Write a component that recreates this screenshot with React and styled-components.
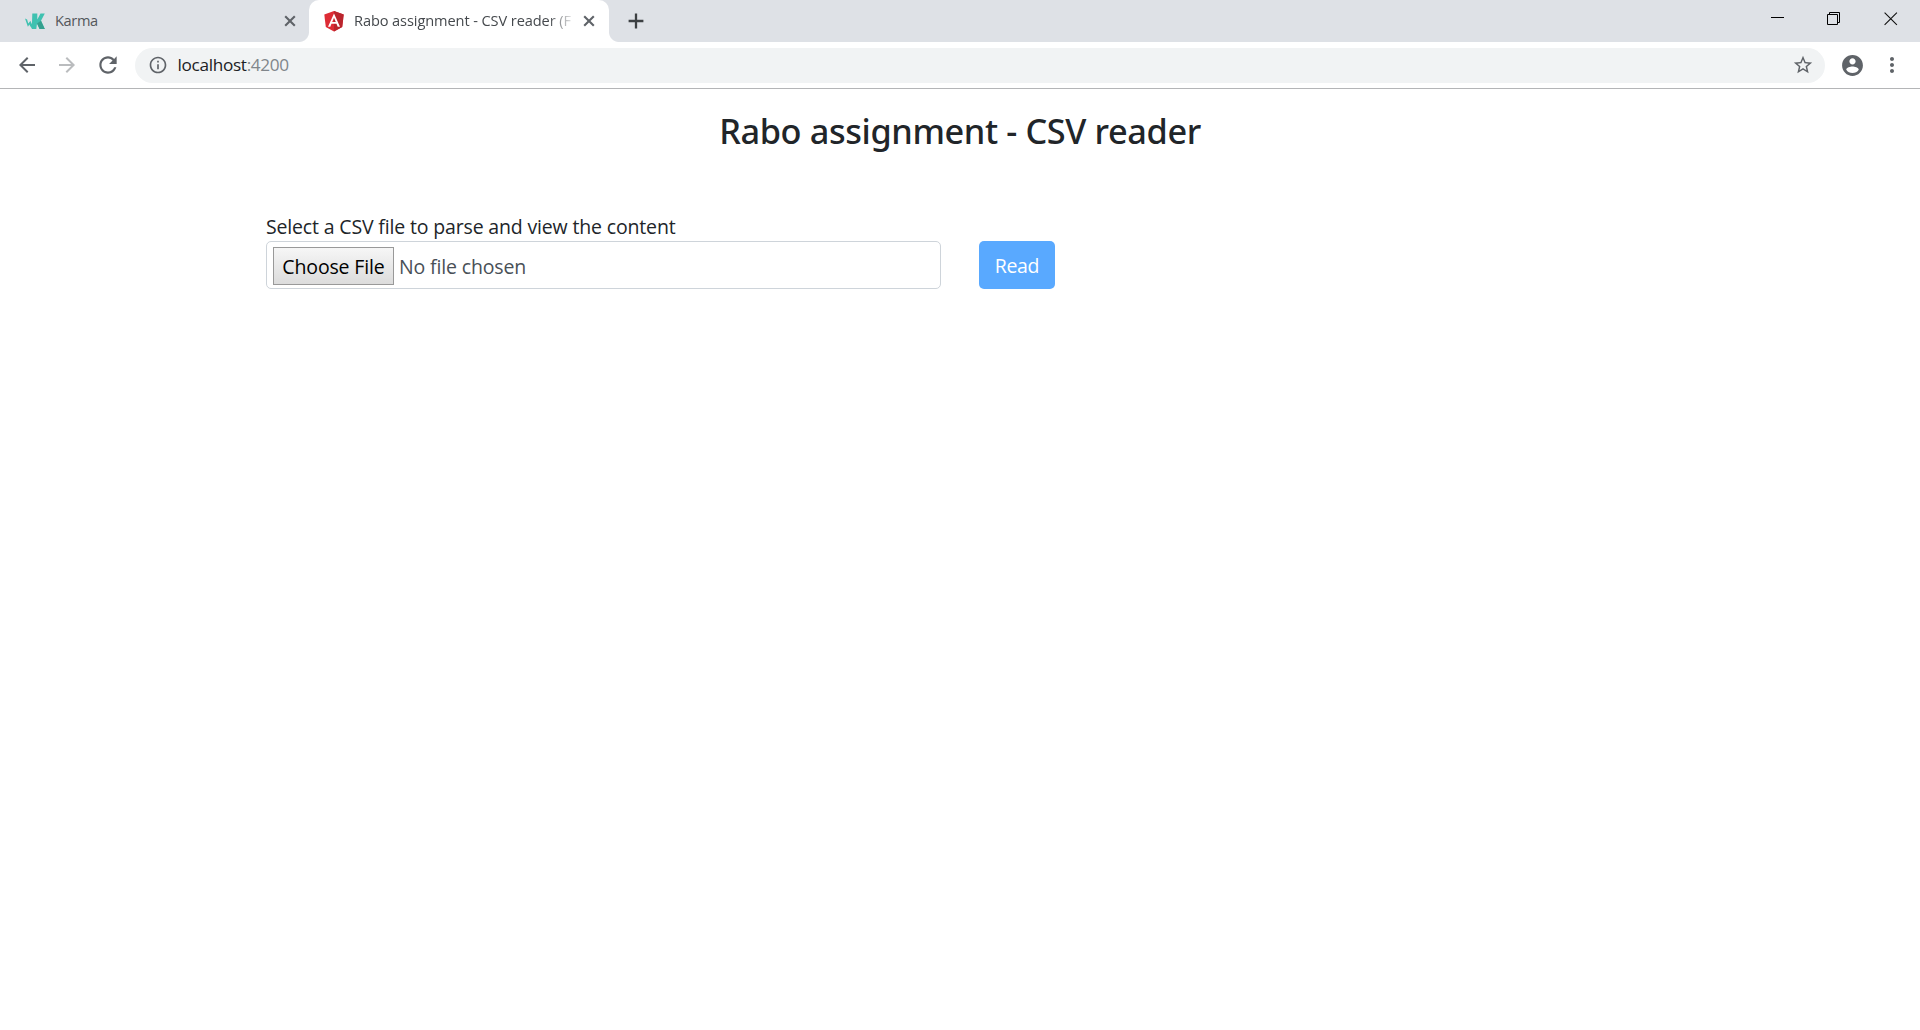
import React from 'react';
import styled, { createGlobalStyle } from 'styled-components';

const GlobalStyle = createGlobalStyle`
  *, *::before, *::after { box-sizing: border-box; }
  html, body { margin: 0; background: #fff; }
  body { font-family: "Open Sans", "Noto Sans", sans-serif; overflow: hidden; }
  svg { display: block; flex: none; }
`;

const Window = styled.div`
  display: flex;
  flex-direction: column;
  height: 100vh;
  background: #fff;
`;

const TabStrip = styled.header`
  display: flex;
  height: 42px;
  background: #dee1e6;
`;

const Tab = styled.div`
  position: relative;
  display: flex;
  align-items: center;
  gap: 10px;
  width: ${(p) => (p.$active ? 300 : 309)}px;
  padding: 0 ${(p) => (p.$active ? 13 : 12)}px 0 ${(p) => (p.$active ? 15 : 25)}px;
  border-radius: 10px 10px 0 0;
  background: ${(p) => (p.$active ? '#fff' : 'transparent')};

  &::before, &::after {
    content: "";
    display: ${(p) => (p.$active ? 'block' : 'none')};
    position: absolute;
    bottom: 0;
    width: 10px;
    height: 10px;
  }
  &::before { left: -10px; background: radial-gradient(circle at 0 0, transparent 9.5px, #fff 10.5px); }
  &::after { right: -10px; background: radial-gradient(circle at 100% 0, transparent 9.5px, #fff 10.5px); }
`;

const TabTitle = styled.span`
  flex: 1;
  min-width: 0;
  overflow: hidden;
  white-space: nowrap;
  padding-bottom: 2px;
  font-size: 14.6px;
  line-height: 24px;
  letter-spacing: ${(p) => p.$tracking}px;
  color: ${(p) => (p.$active ? '#45494d' : '#54575b')};
  mask-image: ${(p) => (p.$active ? 'linear-gradient(to right, #000 194px, transparent 222px)' : 'none')};
`;

const NewTab = styled.div`
  display: flex;
  align-items: center;
  padding-left: 19px;
`;

const WindowControls = styled.div`
  display: flex;
  align-items: flex-start;
  gap: 43px;
  margin-left: auto;
  padding: 12px 22px 0 0;

  svg:last-child { margin-left: 1px; }
`;

const Toolbar = styled.nav`
  display: flex;
  align-items: center;
  height: 47px;
  padding: 0 16px 0 15px;
  border-bottom: 1px solid #b4b5b7;
  background: #fff;
`;

const NavButtons = styled.div`
  display: flex;
  align-items: center;
  gap: 16px;
  width: 120px;
`;

const AddressBar = styled.div`
  display: flex;
  align-items: center;
  flex: 1;
  height: 35px;
  padding: 0 11.5px 0 12.5px;
  border-radius: 18px;
  background: #f1f3f4;
`;

const Url = styled.span`
  flex: 1;
  margin-left: 10px;
  font-size: 17.2px;
  line-height: 24px;
  letter-spacing: -0.32px;
  color: #202124;
`;

const Port = styled.span`
  color: #80868b;
`;

const ToolbarActions = styled.div`
  display: flex;
  align-items: center;
  gap: 15px;
  margin-left: 15px;
`;

const Page = styled.main`
  flex: 1;
  padding-top: 21px;
  color: #212529;
`;

const Title = styled.h1`
  margin: 0 0 60px;
  font-family: "Noto Sans", "Open Sans", sans-serif;
  font-size: 34.3px;
  font-weight: 500;
  line-height: 42px;
  letter-spacing: -0.38px;
  text-align: center;
`;

const Form = styled.form`
  display: flex;
  align-items: flex-end;
  gap: 38px;
  padding-left: 266px;
`;

const Field = styled.div`
  display: flex;
  flex-direction: column;
  width: 675px;
`;

const Label = styled.label`
  height: 29px;
  font-size: 19.5px;
  line-height: 30px;
  letter-spacing: -0.16px;
`;

const FileInput = styled.div`
  display: flex;
  align-items: center;
  gap: 5px;
  height: 48px;
  padding: 1px 6px 0;
  border: 1px solid #ced4da;
  border-radius: 5px;
  background: #fff;
`;

const ChooseButton = styled.button`
  width: 121px;
  height: 38px;
  padding: 2px 0 0;
  border: 1px solid #999;
  border-radius: 0;
  background: linear-gradient(#f6f6f6, #dcdcdc);
  color: #000;
  font: 400 19.5px/34px "Open Sans", sans-serif;
  letter-spacing: -0.14px;
  white-space: nowrap;
`;

const FileStatus = styled.span`
  padding-top: 2px;
  font-size: 19.5px;
  line-height: 34px;
  letter-spacing: -0.15px;
  color: #495057;
`;

const ReadButton = styled.button`
  width: 76px;
  height: 48px;
  padding: 2px 0 0;
  border: 0;
  border-radius: 5px;
  background: #59a9ff;
  color: #fff;
  font: 400 19.5px/46px "Open Sans", sans-serif;
  letter-spacing: -0.35px;
`;

const Icon = ({ d, size = 24, color = '#5f6368' }) => (
  <svg width={size} height={size} viewBox="0 0 24 24" fill={color}>
    <path d={d} />
  </svg>
);

const KarmaLogo = () => (
  <svg width="20" height="17" viewBox="0 0 20 17">
    <path fill="#3fc1b0" d="M7.3 0.4h5v6l3.2-6h4.3l-3.8 7.4L19.8 16h-5.2l-2.6-5.6L11.3 16H6.8z" />
    <path fill="#35a08f" d="M12 10.4l4-2.6 3.8 8.2h-5.2z" />
    <path fill="#3fc1b0" d="M0 5.6l2.1.8 1.2 4 2.2-2.6.9 3.4.6-2.4v6.6l-2.1-2.6-.5-1.4-1.5 2.4z" />
  </svg>
);

const AngularLogo = () => (
  <svg width="20" height="21" viewBox="0 0 20 21">
    <path fill="#dd2c35" d="M10 0l9.7 3.4-1.5 12.5L10 20.6l-8.2-4.7L.3 3.4z" />
    <path fill="#b9252d" d="M10 0l9.7 3.4-1.5 12.5L10 20.6z" />
    <path fill="#fff" fillRule="evenodd" d="M10 2.4L4 15.8h2.3l1.2-3h5l1.2 3H16zm0 4.3l1.8 4.2H8.2z" />
  </svg>
);

const CloseIcon = () => (
  <svg width="14" height="14" viewBox="0 0 14 14" stroke="#5f6368" strokeWidth="2.1">
    <path d="M2.2 2.2l9.6 9.6M11.8 2.2l-9.6 9.6" />
  </svg>
);

export default function App() {
  return (
    <Window>
      <GlobalStyle />
      <TabStrip>
        <Tab>
          <KarmaLogo />
          <TabTitle $tracking={-0.35}>Karma</TabTitle>
          <CloseIcon />
        </Tab>
        <Tab $active>
          <AngularLogo />
          <TabTitle $active $tracking={-0.1}>Rabo assignment - CSV reader (F</TabTitle>
          <CloseIcon />
        </Tab>
        <NewTab>
          <svg width="16" height="16" viewBox="0 0 16 16" stroke="#3c4043" strokeWidth="2.3">
            <path d="M8 .6v14.8M.6 8h14.8" />
          </svg>
        </NewTab>
        <WindowControls>
          <svg width="13" height="13" viewBox="0 0 13 13" stroke="#000">
            <path d="M0 5.5h13" />
          </svg>
          <svg width="13" height="13" viewBox="0 0 13 13" stroke="#000" fill="none">
            <path d="M.5 2.5h10v10H.5zM2.5 2.5v-2h10v10h-2" />
          </svg>
          <svg width="14" height="14" viewBox="0 0 14 14" stroke="#111" strokeWidth="1.1">
            <path d="M.6 .6l12.3 12.3M12.9 .6L.6 12.9" />
          </svg>
        </WindowControls>
      </TabStrip>
      <Toolbar>
        <NavButtons>
          <Icon d="M20 11H7.83l5.59-5.59L12 4l-8 8 8 8 1.41-1.41L7.83 13H20v-2z" />
          <Icon color="#babcbe" d="M12 4l-1.41 1.41L16.17 11H4v2h12.17l-5.58 5.59L12 20l8-8z" />
          <Icon size={26} d="M17.65 6.35C16.2 4.9 14.21 4 12 4c-4.42 0-7.99 3.58-7.99 8s3.57 8 7.99 8c3.73 0 6.84-2.55 7.73-6h-2.08c-.82 2.33-3.04 4-5.65 4-3.31 0-6-2.69-6-6s2.69-6 6-6c1.66 0 3.14.69 4.22 1.78L13 11h7V4l-2.35 2.35z" />
        </NavButtons>
        <AddressBar>
          <Icon size={20} d="M11 7h2v2h-2zm0 4h2v6h-2zm1-9C6.48 2 2 6.48 2 12s4.48 10 10 10 10-4.48 10-10S17.52 2 12 2zm0 18c-4.41 0-8-3.59-8-8s3.59-8 8-8 8 3.59 8 8-3.59 8-8 8z" />
          <Url>localhost<Port>:4200</Port></Url>
          <Icon size={22} d="M22 9.24l-7.19-.62L12 2 9.19 8.63 2 9.24l5.46 4.73L5.82 21 12 17.27 18.18 21l-1.63-7.03L22 9.24zM12 15.4l-3.76 2.27 1-4.28-3.32-2.88 4.38-.38L12 6.1l1.71 4.04 4.38.38-3.32 2.88 1 4.28L12 15.4z" />
        </AddressBar>
        <ToolbarActions>
          <Icon size={25} d="M12 2C6.48 2 2 6.48 2 12s4.48 10 10 10 10-4.48 10-10S17.52 2 12 2zm0 3c1.66 0 3 1.34 3 3s-1.34 3-3 3-3-1.34-3-3 1.34-3 3-3zm0 14.2c-2.5 0-4.71-1.28-6-3.22.03-1.99 4-3.08 6-3.08 1.99 0 5.97 1.09 6 3.08-1.29 1.94-3.5 3.22-6 3.22z" />
          <Icon d="M12 8c1.1 0 2-.9 2-2s-.9-2-2-2-2 .9-2 2 .9 2 2 2zm0 2c-1.1 0-2 .9-2 2s.9 2 2 2 2-.9 2-2-.9-2-2-2zm0 6c-1.1 0-2 .9-2 2s.9 2 2 2 2-.9 2-2-.9-2-2-2z" />
        </ToolbarActions>
      </Toolbar>
      <Page>
        <Title>Rabo assignment - CSV reader</Title>
        <Form onSubmit={(e) => e.preventDefault()}>
          <Field>
            <Label>Select a CSV file to parse and view the content</Label>
            <FileInput>
              <ChooseButton type="button">Choose File</ChooseButton>
              <FileStatus>No file chosen</FileStatus>
            </FileInput>
          </Field>
          <ReadButton type="submit">Read</ReadButton>
        </Form>
      </Page>
    </Window>
  );
}
